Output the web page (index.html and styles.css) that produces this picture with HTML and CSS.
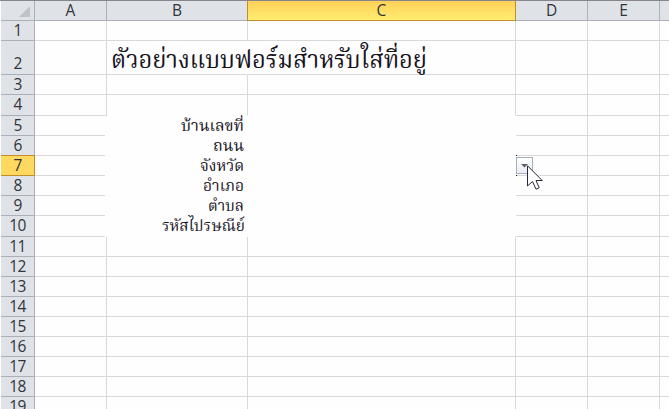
FILE: index.html
```
<!DOCTYPE html>
<html lang="th">
<head>
<meta charset="utf-8">
<title>Sheet</title>
<link rel="stylesheet" href="styles.css">
</head>
<body>
<div class="sheet">
  <div class="row head"><div class="corner"><svg width="33" height="19" viewBox="0 0 33 19"><path d="M29 5V16H18Z" fill="#bfc2c7"/></svg></div><div>A</div><div>B</div><div class="active">C</div><div>D</div><div>E</div><div></div></div>
  <div class="row"><div class="num">1</div><div></div><div></div><div></div><div></div><div></div><div></div></div>
  <div class="row title-row"><div class="num">2</div><div></div><div class="title"><svg width="320" height="33"><text x="4" y="27" textLength="316" lengthAdjust="spacingAndGlyphs">ตัวอย่างแบบฟอร์มสำหรับใส่ที่อยู่</text></svg></div><div></div><div></div><div></div><div></div></div>
  <div class="row"><div class="num">3</div><div></div><div></div><div></div><div></div><div></div><div></div></div>
  <div class="row tall before-form"><div class="num">4</div><div></div><div></div><div></div><div></div><div></div><div></div></div>
  <div class="row form"><div class="num">5</div><div></div><div class="label"><svg width="140" height="19"><text x="74" y="15" textLength="63" lengthAdjust="spacingAndGlyphs">บ้านเลขที่</text></svg></div><div></div><div></div><div></div><div></div></div>
  <div class="row form"><div class="num">6</div><div></div><div class="label"><svg width="140" height="19"><text x="106" y="15" textLength="31" lengthAdjust="spacingAndGlyphs">ถนน</text></svg></div><div></div><div></div><div></div><div></div></div>
  <div class="row form"><div class="num active">7</div><div></div><div class="label"><svg width="140" height="19"><text x="93" y="15" textLength="44" lengthAdjust="spacingAndGlyphs">จังหวัด</text></svg></div><div></div><div class="host">
    <div class="drop"><svg width="17" height="17"><path d="M5 7H12L8.500 10.500Z" fill="#5c5f66"/></svg></div>
    <svg class="cursor" width="17" height="26" viewBox="0 0 17 26"><path d="M.5 .8V21L5.500 16.500L9 24.200L12.200 22.800L9 15.500H15.200Z" fill="#fff" stroke="#29263a"/></svg>
  </div><div></div><div></div></div>
  <div class="row form"><div class="num">8</div><div></div><div class="label"><svg width="140" height="19"><text x="96" y="15" textLength="41" lengthAdjust="spacingAndGlyphs">อำเภอ</text></svg></div><div></div><div></div><div></div><div></div></div>
  <div class="row form"><div class="num">9</div><div></div><div class="label"><svg width="140" height="19"><text x="101" y="15" textLength="36" lengthAdjust="spacingAndGlyphs">ตำบล</text></svg></div><div></div><div></div><div></div><div></div></div>
  <div class="row form tall"><div class="num">10</div><div></div><div class="label"><svg width="140" height="19"><text x="55" y="15" textLength="83" lengthAdjust="spacingAndGlyphs">รหัสไปรษณีย์</text></svg></div><div></div><div></div><div></div><div></div></div>
  <div class="row"><div class="num">11</div><div></div><div></div><div></div><div></div><div></div><div></div></div>
  <div class="row"><div class="num">12</div><div></div><div></div><div></div><div></div><div></div><div></div></div>
  <div class="row"><div class="num">13</div><div></div><div></div><div></div><div></div><div></div><div></div></div>
  <div class="row"><div class="num">14</div><div></div><div></div><div></div><div></div><div></div><div></div></div>
  <div class="row"><div class="num">15</div><div></div><div></div><div></div><div></div><div></div><div></div></div>
  <div class="row"><div class="num">16</div><div></div><div></div><div></div><div></div><div></div><div></div></div>
  <div class="row"><div class="num">17</div><div></div><div></div><div></div><div></div><div></div><div></div></div>
  <div class="row"><div class="num">18</div><div></div><div></div><div></div><div></div><div></div><div></div></div>
  <div class="row"><div class="num">19</div><div></div><div></div><div></div><div></div><div></div><div></div></div>
</div>
</body>
</html>
```
FILE: styles.css
```
* { box-sizing: border-box; }
body { margin: 0; background: #fefefe; }
.sheet {
  width: 669px;
  height: 409px;
  overflow: hidden;
  border-top: 1px solid #88868a;
  padding-left: 1px;
  font: 15.5px/19px "Open Sans", "Noto Sans", sans-serif;
  color: #33343a;
}
.row {
  display: grid;
  grid-template-columns: 34px 72px 141px 268px 72px 72px 9px;
  grid-template-rows: 100%;
  height: 20px;
}
.row > div {
  border-right: 1px solid #d9d9da;
  border-bottom: 1px solid #d9d9da;
  min-width: 0;
}
.row > div:last-child { border-right: 0; }
.row.tall { height: 21px; }
.row.title-row { height: 34px; }
svg { display: block; overflow: visible; }
.head > div {
  background: #dfe2e7;
  border-color: #abafb8;
  text-align: center;
}
.row > .num {
  display: flex;
  align-items: flex-end;
  justify-content: center;
  background: #dfe2e7;
  border-color: #abafb8;
  letter-spacing: -0.7px;
}
.title-row > .num, .tall > .num { padding-bottom: 1px; }
.head > .active {
  background: linear-gradient(#ffd057, #ffee72);
  border-color: #c38d2c;
  box-shadow: -1px 0 #c38d2c;
}
.row > .num.active {
  background: #ffd95f;
  border-color: #c38d2c;
  box-shadow: 0 -1px #c38d2c;
}
.row > .title { position: relative; border-right-color: transparent; }
.title svg { position: absolute; left: 0; top: 0; }
text { fill: #17131d; font-family: "Angsana New", "Norasi", "Kinnari", "Noto Serif Thai", "Tlwg Typist", "Noto Sans Thai", serif; }
.title text { font-size: 24px; }
.label text { font-size: 15px; }
.form > div:nth-child(4) { border-color: #fefefe; }
.form > .label { border-color: #fefefe; box-shadow: -2px 0 #fefefe, -2px 1px #fefefe; }
.before-form > div:nth-child(3), .before-form > div:nth-child(4) { border-bottom-color: #fefefe; }
.host { position: relative; }
.host::before, .host::after {
  content: "";
  position: absolute;
  left: 0;
  width: 1px;
  height: 1px;
  background: #111;
}
.host::before { top: -1px; }
.host::after { bottom: -1px; }
.drop {
  position: absolute;
  left: 0;
  top: 1px;
  width: 17px;
  height: 17px;
  border: 1px solid #a5afba;
  background: linear-gradient(#fff, #e9edf2);
}
.drop svg { margin: -1px; }
.cursor { position: absolute; left: 11px; top: 9px; z-index: 1; }
```
